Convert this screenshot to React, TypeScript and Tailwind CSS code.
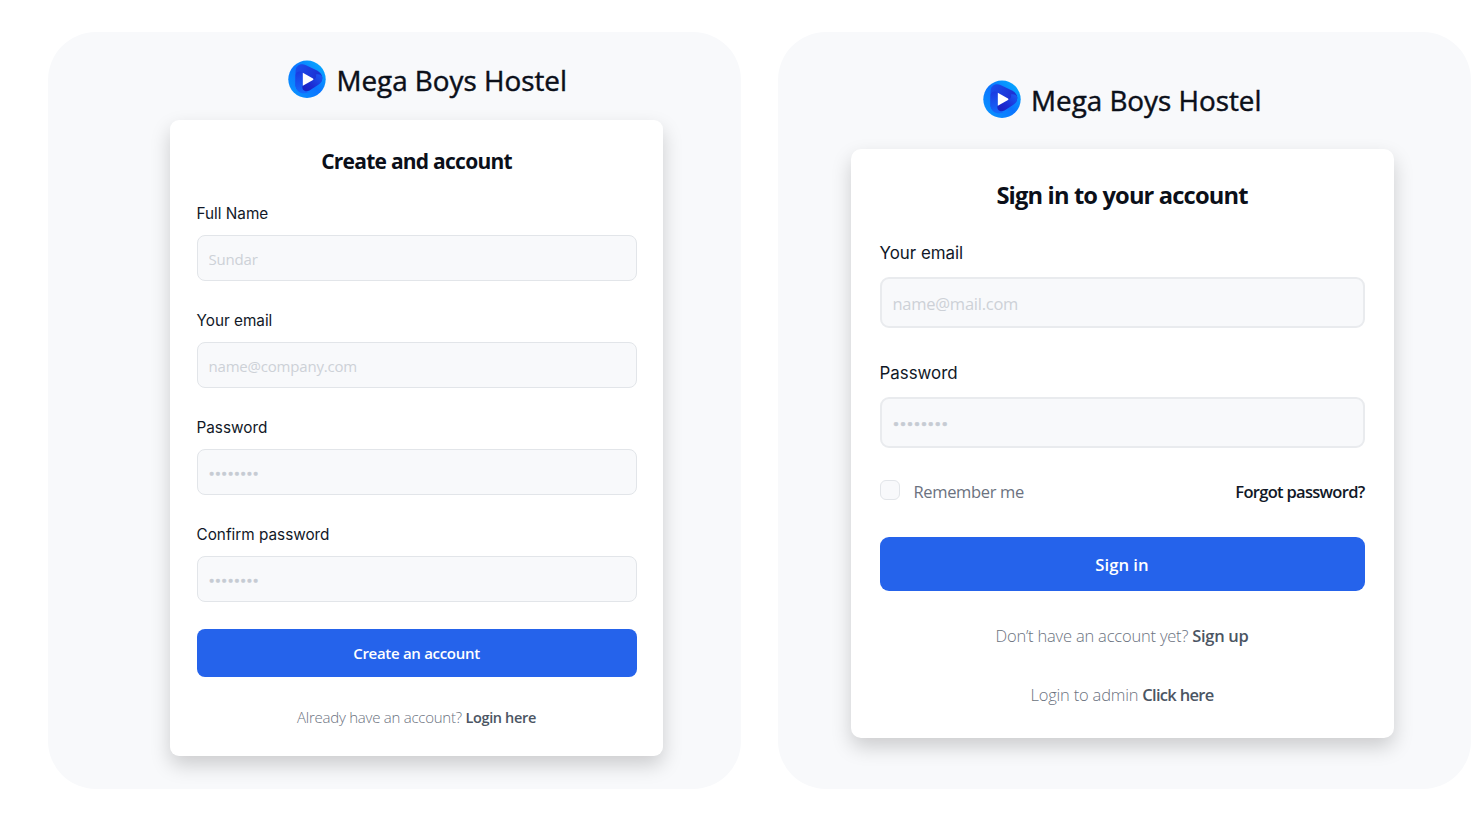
import type { ReactNode } from "react";

function Logo({ id }: { id: string }) {
  return (
    <svg viewBox="0 0 38 38" className="h-[38px] w-[38px] shrink-0">
      <defs>
        <linearGradient id={`${id}-disc`} x1="0.1" y1="0.8" x2="0.8" y2="0.1">
          <stop offset="0" stopColor="#0a8fff" />
          <stop offset="0.5" stopColor="#0b74ff" />
          <stop offset="1" stopColor="#06a2ff" />
        </linearGradient>
        <linearGradient id={`${id}-top`} x1="0" y1="0" x2="1" y2="0.6">
          <stop offset="0" stopColor="#1a50ee" />
          <stop offset="1" stopColor="#1d28cc" />
        </linearGradient>
        <linearGradient id={`${id}-side`} x1="0" y1="0" x2="0.2" y2="1">
          <stop offset="0" stopColor="#1b38e0" />
          <stop offset="1" stopColor="#1568fb" />
        </linearGradient>
        <linearGradient id={`${id}-low`} x1="1" y1="0" x2="0" y2="1">
          <stop offset="0" stopColor="#1a5cf6" />
          <stop offset="0.6" stopColor="#1c2bd2" />
          <stop offset="1" stopColor="#1a20bc" />
        </linearGradient>
      </defs>
      <circle cx="19" cy="19.300" r="18.700" fill={`url(#${id}-disc)`} />
      <path d="M7.500 25 L7.500 12 C7.500 5.500 12.500 3 17.500 5 L29 10.500 C34.500 13.500 35.500 18 33 22 L27 25 L15 31 C11 32 7.500 29 7.500 25 Z" fill={`url(#${id}-top)`} />
      <path d="M7.500 15 C8 11.500 11.500 10.500 14.800 12.500 L14.800 26 C15 29.500 17 31.500 21 32 C14 35.500 7.500 31.500 7.500 25 Z" fill={`url(#${id}-side)`} />
      <path d="M34 16.500 C35 20 33 23.300 30 25 L21.500 30.500 C17 33 13 29 14.800 25.500 L25.500 20.200 C28 18.500 28.500 16.500 28 14.500 C30.500 14 33 14.600 34 16.500 Z" fill={`url(#${id}-low)`} />
      <path d="M14.800 12.700 L25 18.500 Q26 19.200 25 19.900 L14.800 25.700 Z" fill="#fff" />
    </svg>
  );
}

function Brand({ id }: { id: string }) {
  return (
    <div className="flex h-[38px] items-center gap-[10.500px]">
      <Logo id={id} />
      <span className="pt-[2px] text-[27.800px] leading-[38px] text-[#0b0f19] [-webkit-text-stroke:0.45px_#0b0f19]">
        Mega Boys Hostel
      </span>
    </div>
  );
}

function Panel({ children, className }: { children: ReactNode; className: string }) {
  return (
    <section className={`flex h-[757px] w-[693px] shrink-0 flex-col rounded-[48px] bg-[#f8f9fb] ${className}`}>
      {children}
    </section>
  );
}

function SignUpField({ label, placeholder, dots }: { label: string; placeholder: string; dots?: boolean }) {
  return (
    <label className="flex h-[107.200px] flex-col">
      <span className="mb-[9.200px] block h-6 font-[Inter,sans-serif] text-[15.300px] leading-6 text-[#111827]">{label}</span>
      <input
        type="text"
        placeholder={placeholder}
        className={`block h-[46px] w-full rounded-lg border border-[#e2e5e9] bg-[#f8f9fb] px-[11px] ${
          dots
            ? "pt-[2px] font-[Inter,sans-serif] text-[11.200px] placeholder:text-[#c6cbd3] placeholder:[-webkit-text-stroke:0.5px_#c6cbd3]"
            : "pt-[2px] text-[15px] tracking-[-0.2px] placeholder:text-[#cdd1d7]"
        }`}
      />
    </label>
  );
}

function SignInField({ label, placeholder, dots }: { label: string; placeholder: string; dots?: boolean }) {
  return (
    <label className="flex h-[120px] flex-col">
      <span className="mb-[12px] block h-6 font-[Inter,sans-serif] text-[16.900px] leading-6 text-[#111827]">{label}</span>
      <input
        type="text"
        placeholder={placeholder}
        className={`block h-[51.500px] w-full rounded-[9px] border-2 border-[#e9ebee] bg-[#f8f9fb] px-[11px] pt-[3px] ${
          dots
            ? "font-[Inter,sans-serif] text-[12.400px] placeholder:text-[#c6cbd3] placeholder:[-webkit-text-stroke:0.5px_#c6cbd3]"
            : "text-[16.500px] tracking-[-0.25px] placeholder:text-[#cdd1d7]"
        }`}
      />
    </label>
  );
}

function SignUp() {
  return (
    <Panel className="pt-7">
      <div className="pl-[240px]">
        <Brand id="signup" />
      </div>
      <form className="ml-[122px] mt-[22px] flex h-[636px] w-[493px] flex-col rounded-[9px] bg-white px-[26.500px] shadow-[0_9px_20px_rgba(0,0,0,0.18)]">
        <h1 className="mt-[27px] h-7 text-center text-[21px] font-bold leading-7 tracking-[-0.75px] text-[#0b0f19]">
          Create and account
        </h1>
        <div className="mt-[26.500px]">
          <SignUpField label="Full Name" placeholder="Sundar" />
          <SignUpField label="Your email" placeholder="name@company.com" />
          <SignUpField label="Password" placeholder="••••••••" dots />
          <SignUpField label="Confirm password" placeholder="••••••••" dots />
        </div>
        <button type="button" className="-mt-px h-12 shrink-0 rounded-lg bg-[#2563eb] text-[15px] font-semibold tracking-[-0.3px] text-white">
          Create an account
        </button>
        <p className="mt-[28px] text-center text-[15px] font-light leading-6 tracking-[-0.25px] text-[#6b7280]">
          Already have an account?{" "}
          <a className="text-[14.500px] font-semibold tracking-[-0.35px] text-[#4b5563]">Login here</a>
        </p>
      </form>
    </Panel>
  );
}

function SignIn() {
  return (
    <Panel className="items-center pt-12">
      <div className="-ml-[5px]">
        <Brand id="signin" />
      </div>
      <form className="-ml-[5px] mt-[30.500px] flex h-[589.500px] w-[543px] flex-col rounded-[10px] bg-white px-[29px] shadow-[0_9px_20px_rgba(0,0,0,0.18)]">
        <h1 className="mt-[30px] h-8 text-center text-[23.700px] font-bold leading-8 tracking-[-0.85px] text-[#0b0f19]">
          Sign in to your account
        </h1>
        <div className="mt-[30px]">
          <SignInField label="Your email" placeholder="name@mail.com" />
          <SignInField label="Password" placeholder="••••••••" dots />
        </div>
        <div className="flex h-6 items-center justify-between text-[16.500px]">
          <label className="flex items-center gap-[14px] tracking-[-0.35px] text-[#6b7280]">
            <span className="mb-[5px] block size-5 rounded-[6px] border-[1.5px] border-[#e2e5e9] bg-[#f8f9fb]" />
            Remember me
          </label>
          <a className="font-semibold tracking-[-0.700px] text-[#111827]">Forgot password?</a>
        </div>
        <button type="button" className="mt-[32px] h-[54px] shrink-0 rounded-[9px] bg-[#2563eb] pt-[2px] text-[16.700px] font-semibold text-white">
          Sign in
        </button>
        <p className="mt-[33px] text-center text-[16.500px] font-light leading-6 tracking-[-0.2px] text-[#6b7280]">
          Don’t have an account yet?{" "}
          <a className="font-semibold tracking-[-0.3px] text-[#4b5563]">Sign up</a>
        </p>
        <p className="mt-[35px] text-center text-[16.500px] font-light leading-6 tracking-[-0.2px] text-[#6b7280]">
          Login to admin <a className="font-semibold tracking-[-0.7px] text-[#4b5563]">Click here</a>
        </p>
      </form>
    </Panel>
  );
}

export default function App() {
  return (
    <main className="flex h-[815px] w-[1482px] gap-[37px] overflow-hidden bg-white pl-12 pt-8 font-['Open_Sans','Noto_Sans',sans-serif]">
      <SignUp />
      <SignIn />
    </main>
  );
}
